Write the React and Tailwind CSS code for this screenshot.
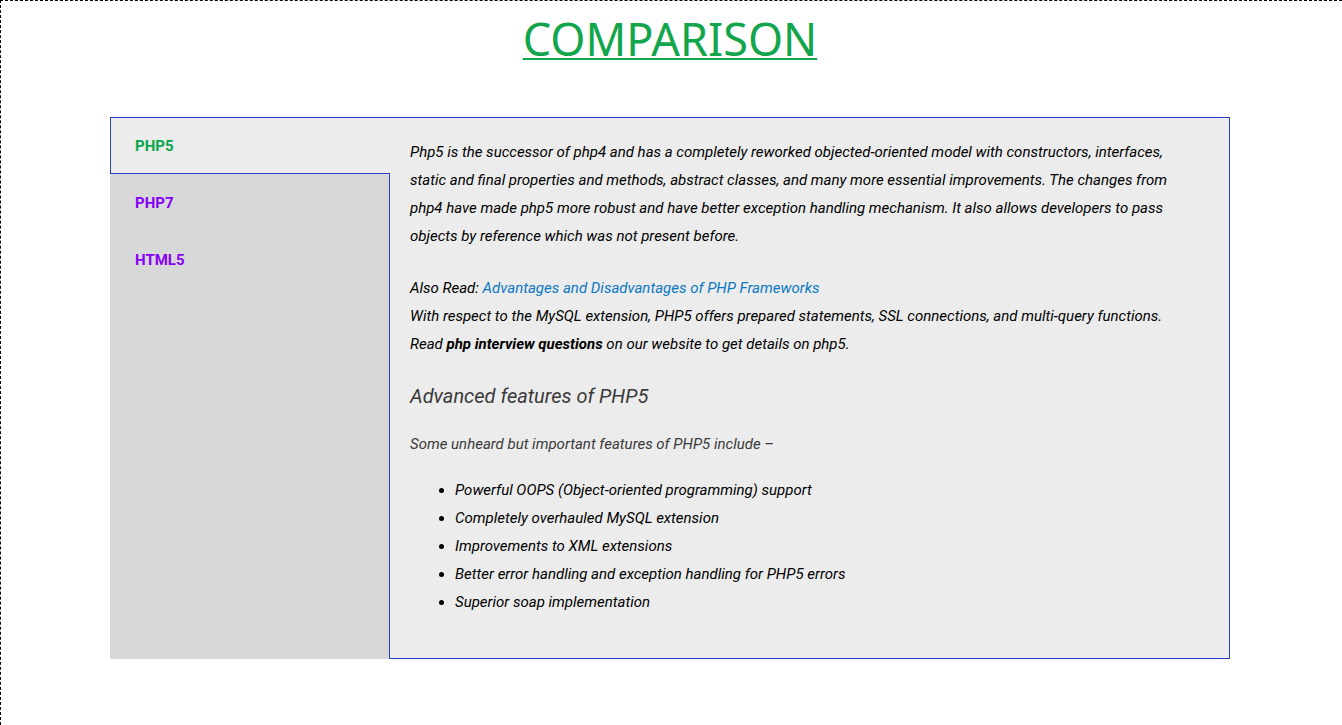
import { useState } from "react";

const tabs = ["PHP5", "PHP7", "HTML5"];
const features = [
  "Powerful OOPS (Object-oriented programming) support",
  "Completely overhauled MySQL extension",
  "Improvements to XML extensions",
  "Better error handling and exception handling for PHP5 errors",
  "Superior soap implementation",
];

export default function App() {
  const [active, setActive] = useState("PHP5");
  return (
    <main className="min-h-screen border-t border-l border-dashed border-black bg-white pr-[3px] pb-8 font-['Roboto',sans-serif] text-black">
      <h1 className="pt-2 text-center font-['Noto_Sans',sans-serif] text-[45px] leading-[60px] text-[#12a54b] underline decoration-2 underline-offset-2 [text-decoration-skip-ink:none]">
        COMPARISON
      </h1>
      <section className="mx-auto mt-12 flex max-w-[1120px] bg-[#ececec]">
        <div role="tablist" aria-label="Comparison" className="flex w-1/4 flex-col bg-[#d8d8d8]">
          {tabs.map((tab) => (
            <button
              key={tab}
              type="button"
              role="tab"
              aria-selected={active === tab}
              onClick={() => setActive(tab)}
              className={
                active === tab
                  ? "h-[57px] border-y border-l border-[#2743c4] bg-[#ececec] px-6 pt-0.5 text-left text-[15px] font-bold text-[#06a74a]"
                  : "h-[57px] border-r border-l border-l-transparent border-r-[#2743c4] px-6 pt-0.5 text-left text-[15px] font-bold text-[#8600f5]"
              }
            >
              {tab}
            </button>
          ))}
          <div className="flex-1 border-r border-[#2743c4]" />
        </div>
        <div role="tabpanel" aria-label={active} className="flex-1 border-y border-r border-[#2743c4] px-5 pt-5 pb-[42px] text-[15px] leading-7 italic">
          <p className="max-w-[780px]">
            Php5 is the successor of php4 and has a completely reworked objected-oriented model with constructors, interfaces, static and final properties and methods, abstract classes, and many more essential improvements. The changes from php4 have made php5 more robust and have better exception handling mechanism. It also allows developers to pass objects by reference which was not present before.
          </p>
          <p className="mt-6 max-w-[780px]">
            Also Read: <a href="#frameworks" className="text-[#0a78c2]">Advantages and Disadvantages of PHP Frameworks</a>
            <br />
            With respect to the MySQL extension, PHP5 offers prepared statements, SSL connections, and multi-query functions. Read <strong>php interview questions</strong> on our website to get details on php5.
          </p>
          <h2 className="mt-6 text-xl leading-7 text-[#3a3a3a]">Advanced features of PHP5</h2>
          <p className="mt-5 text-[#3a3a3a]">Some unheard but important features of PHP5 include –</p>
          <ul className="mt-[18px] list-disc pl-[45px]">
            {features.map((feature) => (
              <li key={feature}>{feature}</li>
            ))}
          </ul>
        </div>
      </section>
    </main>
  );
}
